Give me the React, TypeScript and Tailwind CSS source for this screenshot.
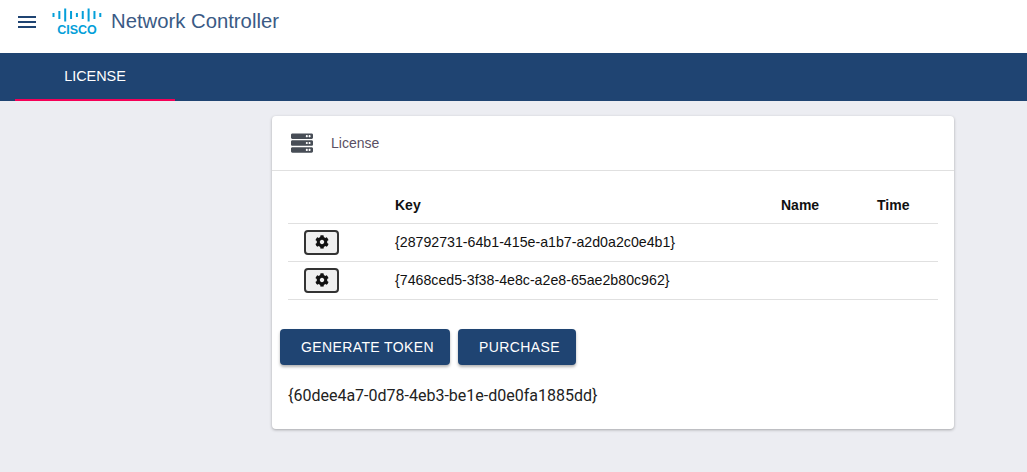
import { FaCog, FaServer } from "react-icons/fa";

const licenses = [
  "{28792731-64b1-415e-a1b7-a2d0a2c0e4b1}",
  "{7468ced5-3f38-4e8c-a2e8-65ae2b80c962}",
];

const CiscoLogo = () => {
  const bars = [4, 8, 13, 8, 4, 8, 13, 8, 4];
  return (
    <div className="flex w-[50px] flex-col items-center">
      <svg width="50" height="14" viewBox="0 0 50 14">
        {bars.map((h, i) => (
          <rect key={i} x={0.5 + i * 5.85} y={7 - h / 2} width="2" height={h} fill="#049fd9" />
        ))}
      </svg>
      <span className="mt-[2px] font-['Liberation_Sans',sans-serif] text-[12.5px] leading-[12px] font-bold text-[#049fd9]">
        CISCO
      </span>
    </div>
  );
};

export default function App() {
  return (
    <div className="flex min-h-[472px] flex-col bg-[#ecedf2] font-['Liberation_Sans',sans-serif]">
      {/* Header */}
      <header className="flex h-[53px] items-center bg-white pb-[10px] pl-[18px]">
        <svg width="18" height="12" viewBox="0 0 18 12" className="shrink-0">
          <path d="M0 0h18v2H0zM0 5h18v2H0zM0 10h18v2H0z" fill="#1f4472" />
        </svg>
        <div className="ml-[16px]">
          <CiscoLogo />
        </div>
        <h1 className="ml-[9px] text-[20.3px] leading-none font-normal text-[#3a5a85]">Network Controller</h1>
      </header>

      {/* Tabs */}
      <nav className="flex h-[48px] bg-[#1f4472] pl-[15px]">
        <div className="flex w-[160px] items-center justify-center border-b-2 border-[#f50057] pt-[2px] text-[14.4px] text-white">
          LICENSE
        </div>
      </nav>

      {/* Card */}
      <main className="flex pt-[15px] pl-[272px]">
        <section className="h-[313px] w-[682px] rounded bg-white shadow-[0_1px_3px_rgba(0,0,0,0.3)]">
          <div className="flex h-[55px] items-center border-b border-[#e0e0e0] pl-[19px]">
            <FaServer className="text-[#474d56]" size={22} />
            <span className="ml-[18px] text-[14px] text-[#5a4f63]">License</span>
          </div>

          <div className="px-[16px] pt-[15px]">
            <table className="w-[650px] table-fixed border-collapse text-[#111]">
              <thead>
                <tr className="h-[37px] border-b border-[#e0e0e0] text-left text-[14px] font-bold">
                  <th className="w-[107px]" />
                  <th className="w-[386px] pt-[2px] font-bold">Key</th>
                  <th className="w-[96px] pt-[2px] font-bold">Name</th>
                  <th className="pt-[2px] font-bold">Time</th>
                </tr>
              </thead>
              <tbody>
                {licenses.map((key) => (
                  <tr key={key} className="h-[38px] border-b border-[#e0e0e0] text-[14.2px]">
                    <td className="pl-[16px]">
                      <button className="flex h-[25px] w-[35px] items-center justify-center rounded-[4px] border-2 border-[#333] bg-[#efefef]">
                        <FaCog size={14} className="text-[#111]" />
                      </button>
                    </td>
                    <td className="pt-[2px]">{key}</td>
                    <td />
                    <td />
                  </tr>
                ))}
              </tbody>
            </table>

            <div className="mt-[29px] -ml-[8px] flex gap-[8px] text-[14px] font-normal tracking-[0.4px] text-white">
              <button className="h-[36px] w-[170px] rounded bg-[#1f4472] pt-[1px] pl-[5px] shadow-[0_2px_3px_rgba(0,0,0,0.3)]">
                GENERATE TOKEN
              </button>
              <button className="h-[36px] w-[118px] rounded bg-[#1f4472] pt-[1px] pl-[5px] shadow-[0_2px_3px_rgba(0,0,0,0.3)]">
                PURCHASE
              </button>
            </div>

            <p className="mt-[21px] font-['Roboto',sans-serif] text-[16px] leading-[20px] text-[#222]">
              {"{60dee4a7-0d78-4eb3-be1e-d0e0fa1885dd}"}
            </p>
          </div>
        </section>
      </main>
    </div>
  );
}
